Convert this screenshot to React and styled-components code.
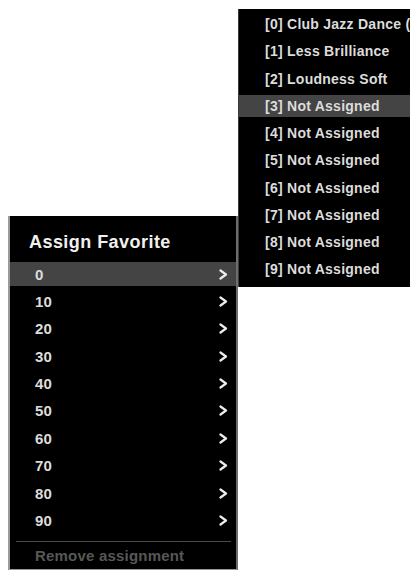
import React from "react";
import styled, { createGlobalStyle } from "styled-components";

const Global = createGlobalStyle`
  html, body { margin: 0; padding: 0; background: #fff; }
  body { font-family: "Liberation Sans", Arial, sans-serif; }
`;

const Stage = styled.div`
  display: flex;
  align-items: flex-start;
  padding: 9px 0 0 8px;
  width: 415px;
  height: 573px;
  box-sizing: border-box;
  overflow: hidden;
`;

const MainMenu = styled.div`
  margin-top: 207px;
  width: 230px;
  height: 354px;
  box-sizing: border-box;
  background: #000;
  border-left: 2px solid #9a9a9a;
  border-right: 2px solid #6e6e6e;
  border-bottom: 1px solid #9a9a9a;
  display: flex;
  flex-direction: column;
`;

const Title = styled.div`
  height: 46px;
  display: flex;
  align-items: center;
  padding: 6px 0 0 19px;
  box-sizing: border-box;
  color: #f0f0f0;
  font-weight: 700;
  font-size: 18px;
  letter-spacing: 0.45px;
`;

const List = styled.div`
  display: flex;
  flex-direction: column;
  gap: ${(p) => p.$gap}px;
`;

const Row = styled.div`
  height: ${(p) => p.$h}px;
  display: flex;
  align-items: center;
  justify-content: space-between;
  padding: 0 ${(p) => p.$pr || 0}px 0 ${(p) => p.$pl}px;
  background: ${(p) => (p.$active ? "#444444" : "transparent")};
  color: #dcdcdc;
  font-weight: 700;
  font-size: ${(p) => p.$fs}px;
  letter-spacing: 0.25px;
  white-space: nowrap;
  overflow: hidden;
`;

const Chevron = styled.svg`
  width: 9px;
  height: 11px;
  flex: none;
`;

const Separator = styled.div`
  height: 1px;
  margin: 8px 5px 0 6px;
  background: #4a4a4a;
`;

const Remove = styled.div`
  flex: 1;
  display: flex;
  align-items: center;
  padding-left: 25px;
  color: #575757;
  font-weight: 700;
  font-size: 15px;
  letter-spacing: 0.2px;
`;

const SubMenu = styled.div`
  width: 172px;
  height: 278px;
  box-sizing: border-box;
  background: #000;
  border-left: 1px solid #3a3a3a;
  padding-top: 4px;
  overflow: hidden;
`;

const favorites = ["0", "10", "20", "30", "40", "50", "60", "70", "80", "90"];
const presets = [
  "Club Jazz Dance (",
  "Less Brilliance",
  "Loudness Soft",
  "Not Assigned",
  "Not Assigned",
  "Not Assigned",
  "Not Assigned",
  "Not Assigned",
  "Not Assigned",
  "Not Assigned",
];

const Arrow = () => (
  <Chevron viewBox="0 0 9 11">
    <polyline
      points="1.5,1.5 7,5.5 1.5,9.5"
      fill="none"
      stroke="#ececec"
      strokeWidth="2.2"
      strokeLinecap="round"
      strokeLinejoin="round"
    />
  </Chevron>
);

export default function App() {
  return (
    <>
      <Global />
      <Stage>
        <MainMenu>
          <Title>Assign Favorite</Title>
          <List $gap={3.4}>
            {favorites.map((f, i) => (
              <Row key={f} $h={24} $pl={25} $pr={8} $fs={15} $active={i === 0}>
                <span>{f}</span>
                <Arrow />
              </Row>
            ))}
          </List>
          <Separator />
          <Remove>Remove assignment</Remove>
        </MainMenu>
        <SubMenu>
          <List $gap={5.25}>
            {presets.map((p, i) => (
              <Row key={i} $h={22} $pl={26} $fs={14} $active={i === 3}>
                <span>
                  [{i}] {p}
                </span>
              </Row>
            ))}
          </List>
        </SubMenu>
      </Stage>
    </>
  );
}
